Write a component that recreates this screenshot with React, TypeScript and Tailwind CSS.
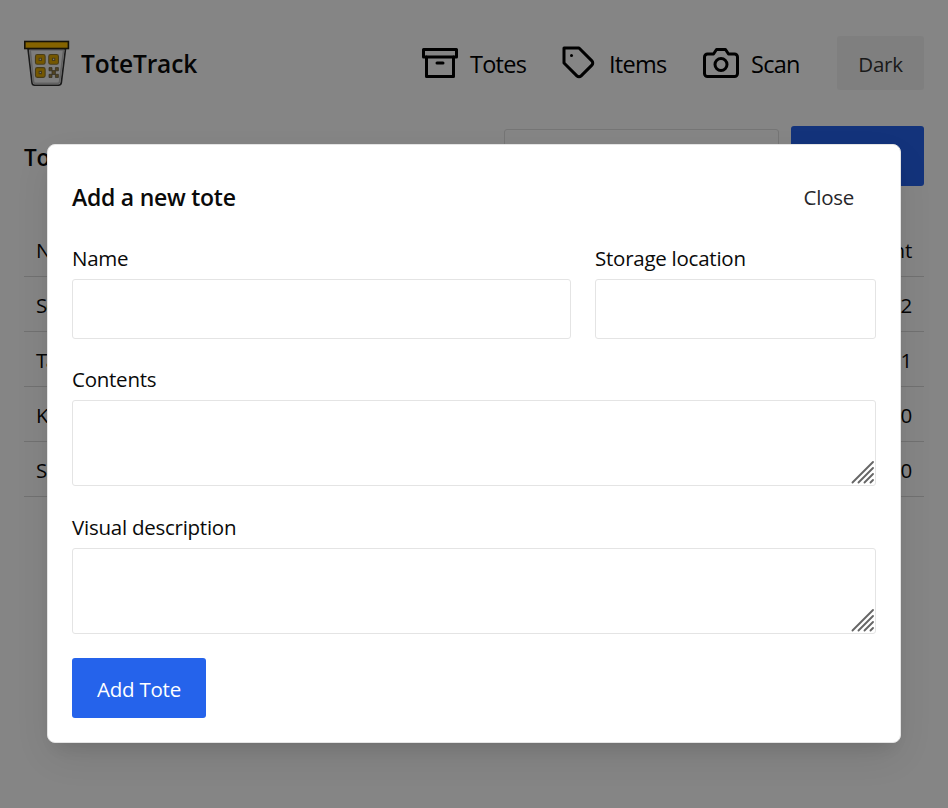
import React from "react";

type Row = { name: string; count: number };

const rows: Row[] = [
  { name: "Seasonal", count: 2 },
  { name: "Tapes", count: 1 },
  { name: "Kitchen", count: 0 },
  { name: "Sports", count: 0 },
];

function Logo() {
  return (
    <svg viewBox="0 -1 48 48" className="h-12 w-12 shrink-0" fill="none">
      <path d="M4 9 L8 43 Q8.3 45.2 10.5 45.2 H34.5 Q36.7 45.2 37.3 43 L41.5 9 Z" fill="#f0f0f0" stroke="#333" strokeWidth="1.6" />
      <path d="M6.2 10 L9.6 42 Q9.9 43.4 11.5 43.4 H33.5 Q35.2 43.4 35.5 42 L39.6 10 Z" stroke="#bdbdbd" strokeWidth="1.6" />
      <rect x="0.8" y="1.5" width="43.6" height="7" fill="#ffbf00" stroke="#2b2410" strokeWidth="1.6" />
      <g stroke="#8a7430" strokeWidth="4.8" strokeLinejoin="round">
        <rect x="13.3" y="16.4" width="6" height="6" />
        <rect x="26.6" y="16.4" width="6" height="6" />
        <rect x="13.3" y="29.5" width="6" height="6" />
      </g>
      <g stroke="#e0a800" strokeWidth="2.6" strokeLinejoin="round">
        <rect x="13.3" y="16.4" width="6" height="6" />
        <rect x="26.6" y="16.4" width="6" height="6" />
        <rect x="13.3" y="29.5" width="6" height="6" />
      </g>
      <path d="M25 27.6h3v3h3.4v-3h3v3.2h-3v3.5h3v3.2h-3v-3H28v3h-3v-3.2h3v-3.5h-3z" fill="#9c8340" stroke="#5e553d" strokeWidth="0.7" />
    </svg>
  );
}

function Icon({ children }: { children: React.ReactNode }) {
  return (
    <svg viewBox="0 0 24 24" className="h-9 w-9 shrink-0" fill="none" stroke="currentColor" strokeWidth="2" strokeLinecap="round" strokeLinejoin="round">
      {children}
    </svg>
  );
}

function NavItem({ label, icon, width }: { label: string; icon: React.ReactNode; width: string }) {
  return (
    <a className={`flex items-center gap-3 text-[23.5px] leading-9 tracking-[-0.75px] ${width}`}>
      <Icon>{icon}</Icon>
      <span className="pt-0.5">{label}</span>
    </a>
  );
}

function TextArea({ label }: { label: string }) {
  return (
    <label className="flex flex-col">
      <span className="h-9 leading-[30px]">{label}</span>
      <span className="flex h-[86px] items-end justify-end rounded-[3px] border border-[#e4e4e4] pb-px">
        <svg viewBox="0 0 24 24" className="h-6 w-6" stroke="#666" strokeWidth="1.9" strokeLinecap="round">
          <path d="M1.5 22.5 22 2M7.5 22.5 22 8M13.5 22.5 22 14M19.5 22.5 22 20" />
        </svg>
      </span>
    </label>
  );
}

export default function App() {
  return (
    <div className="relative h-[808px] w-[948px] overflow-hidden bg-white font-['Open_Sans','Noto_Sans',sans-serif] text-[20.5px] tracking-[-0.25px] text-[#0a0a0a]">
      <header className="flex h-[126px] items-start px-6 pt-9">
        <div className="flex h-[54px] w-[398px] items-center gap-[9px]">
          <Logo />
          <span className="pt-[3px] text-[24.5px] font-semibold tracking-[-0.15px]">ToteTrack</span>
        </div>
        <nav className="flex h-[54px] items-center text-black">
          <NavItem width="w-[139px]" label="Totes" icon={<><path d="M21 8v13H3V8" /><rect x="1" y="3" width="22" height="5" /><path d="M10 12h4" /></>} />
          <NavItem width="w-[142px]" label="Items" icon={<><path d="M20.59 13.41l-7.17 7.17a2 2 0 0 1-2.83 0L2 12V2h10l8.59 8.59a2 2 0 0 1 0 2.82z" /><path d="M7 7h.01" /></>} />
          <NavItem width="w-[134px]" label="Scan" icon={<><path d="M23 19a2 2 0 0 1-2 2H3a2 2 0 0 1-2-2V8a2 2 0 0 1 2-2h4l2-3h6l2 3h4a2 2 0 0 1 2 2z" /><circle cx="12" cy="13" r="4" /></>} />
        </nav>
        <button className="h-[54px] w-[87px] rounded-[3px] bg-[#f4f4f4] pt-0.5 text-[#333]">Dark</button>
      </header>

      <main className="px-6">
        <div className="flex h-[60px] items-center">
          <h1 className="w-[480px] pt-1 text-[22.5px] font-semibold">Totes</h1>
          <div className="h-[54px] w-[275px] rounded-[3px] border border-[#e0e0e0]" />
          <button className="ml-3 h-[60px] w-[133px] rounded-[3px] bg-[#2563eb] text-white">Add Tote</button>
        </div>
        <div className="mt-9">
          <div className="flex h-[55px] items-center justify-between border-b border-[#d9d9d9] px-3 pt-[3px]">
            <span>Name</span>
            <span>Count</span>
          </div>
          {rows.map((row) => (
            <div key={row.name} className="flex h-[55px] items-center justify-between border-b border-[#d9d9d9] px-3 pt-[3px]">
              <span className="tracking-[-1.5px]">{row.name}</span>
              <span>{row.count}</span>
            </div>
          ))}
        </div>
      </main>

      <div className="absolute inset-0 flex items-start justify-center bg-black/48 pt-36">
        <section className="h-[599px] w-[854px] rounded-lg border border-[#e4e4e4] bg-white p-6 shadow-[0_15px_38px_-5px_rgba(0,0,0,0.1),0_12px_15px_-9px_rgba(0,0,0,0.1)]">
          <div className="flex h-[60px] items-center justify-between pb-1">
            <h2 className="text-[23px] font-semibold">Add a new tote</h2>
            <button className="pr-[22px] text-[#27272a]">Close</button>
          </div>
          <div className="mt-[14px] flex gap-6">
            <label className="flex w-[499px] flex-col">
              <span className="h-9 leading-[30px]">Name</span>
              <span className="h-[60px] rounded-[3px] border border-[#e4e4e4]" />
            </label>
            <label className="flex w-[281px] flex-col">
              <span className="h-9 leading-[30px]">Storage location</span>
              <span className="h-[60px] rounded-[3px] border border-[#e4e4e4]" />
            </label>
          </div>
          <div className="mt-[25px] flex flex-col gap-[26px]">
            <TextArea label="Contents" />
            <TextArea label="Visual description" />
          </div>
          <button className="mt-6 h-[60px] w-[134px] rounded-[3px] bg-[#2563eb] pt-[3px] text-white">Add Tote</button>
        </section>
      </div>
    </div>
  );
}
